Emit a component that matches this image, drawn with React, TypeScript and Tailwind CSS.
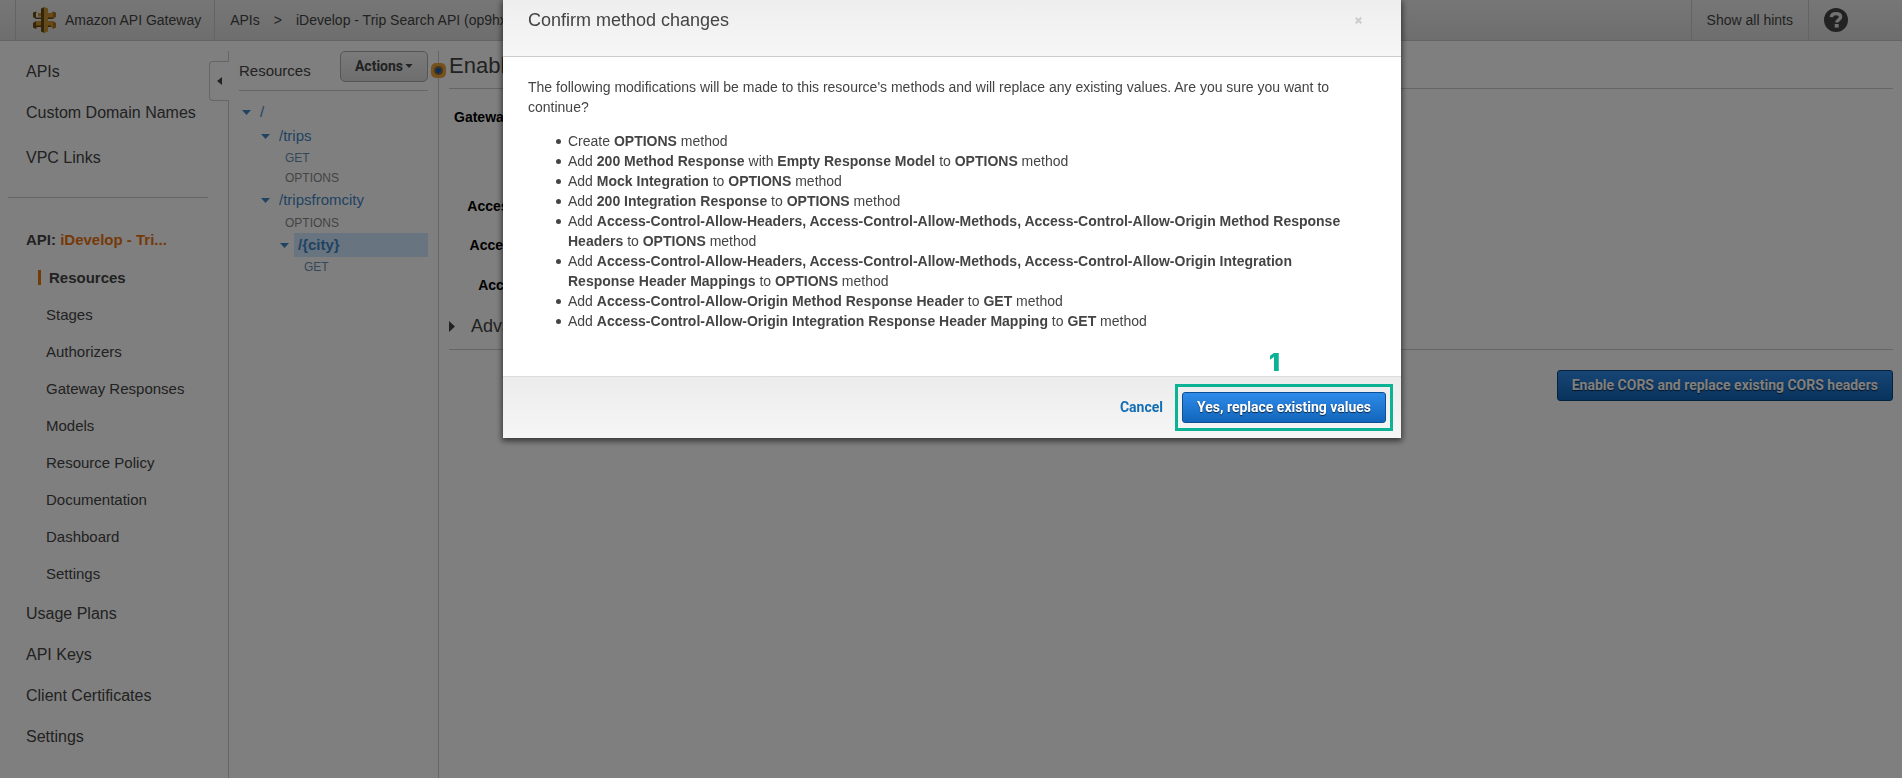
import React from "react";

const topLinks = ["APIs", "Custom Domain Names"];
const apiLinks = [
  "Stages",
  "Authorizers",
  "Gateway Responses",
  "Models",
  "Resource Policy",
  "Documentation",
  "Dashboard",
  "Settings",
];
const bottomLinks = ["Usage Plans", "API Keys", "Client Certificates", "Settings"];

function GatewayLogo() {
  return (
    <svg className="h-[26px] w-[23px]" viewBox="0 0 23 26" aria-hidden="true">
      <path d="M3 4.500L0 5.500v4.500l3 2zM3 14L0 16v4.500l3 1.500z" fill="#6b4a10" />
      <path d="M3 4.500V12h5V9.500H5V6.500L3 4.500zM3 6h5v6H3zM3 14h5v6H5l-2 2z" fill="#cf9530" />
      <path d="M15 6h3l2-1.500V12h-5zM15 14h5v8l-2-2h-3z" fill="#cf9530" />
      <path d="M20 4.500l3 1V10l-3 2zM20 14l3 2v4.500L20 22z" fill="#a87522" />
      <path d="M8 1.500L11.500 0v26L8 24.500z" fill="#6b4a10" />
      <path d="M11.500 0L15 1.500v23L11.500 26z" fill="#cf9530" />
      <path d="M3 12h5v-1.500H3zM15 12h5v-1.500h-5zM3 20h5v-1.500H3zM15 20h3v-1.500h-3z" fill="#6b4a10" />
    </svg>
  );
}

function Caret({ className = "h-[5px] w-[9px]" }: { className?: string }) {
  return (
    <svg className={`shrink-0 ${className}`} viewBox="0 0 9 5" aria-hidden="true">
      <path d="M0 0h9L4.500 5z" fill="currentColor" />
    </svg>
  );
}

function Header() {
  return (
    <header className="flex h-[41px] items-stretch border-b border-[#c8c8c8] bg-linear-to-b from-[#eeeeee] to-[#dcdcdc] text-sm text-[#444]">
      <div className="w-4 border-r border-[#c8c8c8]" />
      <a href="#home" className="flex items-center gap-[9px] border-r border-[#c8c8c8] pr-[13px] pl-[17px]">
        <GatewayLogo />
        Amazon API Gateway
      </a>
      <nav className="flex flex-1 items-center gap-[14px] pl-[15px]" aria-label="Breadcrumb">
        <a href="#apis">APIs</a>
        <span>&gt;</span>
        <a href="#api">iDevelop - Trip Search API (op9hx2k4tb)</a>
      </nav>
      <a href="#hints" className="flex items-center border-x border-[#c8c8c8] px-[15px]">
        Show all hints
      </a>
      <button type="button" aria-label="Help" className="mr-[54px] ml-[15px]">
        <svg className="size-6" viewBox="0 0 24 24" aria-hidden="true">
          <circle cx="12" cy="12" r="12" fill="#444" />
          <path
            d="M7.300 9.200C7.500 6.500 9.300 5.600 12 5.600c2.900 0 4.600 1.200 4.600 3.400 0 3-3.800 2.800-3.800 5.500"
            fill="none"
            stroke="#e4e4e4"
            strokeWidth="3.4"
          />
          <path d="M10.700 16h4v3.600h-4z" fill="#e4e4e4" />
        </svg>
      </button>
    </header>
  );
}

function Sidebar() {
  return (
    <div className="relative w-[229px] shrink-0 pt-[10px]">
      <nav className="h-full border-r border-[#ccc] text-base text-[#444]">
        <ul className="pl-[26px]">
          {topLinks.map((t) => (
            <li key={t} className="flex h-[41px] items-center">
              <a href="#nav">{t}</a>
            </li>
          ))}
          <li className="flex h-[49px] items-center">
            <a href="#nav">VPC Links</a>
          </li>
        </ul>
        <hr className="mt-[15px] mr-5 ml-2 border-[#ccc]" />
        <p className="mt-[30px] pl-[26px] text-[15px] leading-[24px] font-bold">
          API: <a href="#api" className="text-[#ec7211]">iDevelop - Tri...</a>
        </p>
        <ul className="mt-[7px] text-[15px]">
          <li className="mb-px flex h-[37px] items-center pl-[38px] font-bold">
            <a href="#resources" className="border-l-3 border-[#e47911] pl-2 leading-[15px]">
              Resources
            </a>
          </li>
          {apiLinks.map((t) => (
            <li key={t} className="flex h-[37px] items-center pl-[46px]">
              <a href="#nav">{t}</a>
            </li>
          ))}
        </ul>
        <ul className="pl-[26px]">
          {bottomLinks.map((t) => (
            <li key={t} className="flex h-[41px] items-center">
              <a href="#nav">{t}</a>
            </li>
          ))}
        </ul>
      </nav>
      <button
        type="button"
        aria-label="Collapse sidebar"
        className="absolute top-5 right-0 flex h-10 w-5 items-center justify-center rounded-l-sm border border-r-0 border-[#ccc] bg-white text-[#444]"
      >
        <svg className="h-2 w-[5px]" viewBox="0 0 5 8" aria-hidden="true">
          <path d="M5 0v8L0 4z" fill="currentColor" />
        </svg>
      </button>
    </div>
  );
}

function ResourceTree() {
  return (
    <section className="relative w-[210px] shrink-0 pt-[10px]">
      <div className="h-full border-r border-[#ccc] pr-[10px] pl-[10px] text-[15px] text-[#4386c5]">
        <div className="flex h-10 items-start justify-between border-b border-[#ccc] text-[#444]">
          <h2 className="pt-2 leading-6">Resources</h2>
          <button
            type="button"
            className="flex h-[31px] w-[88px] items-center justify-center gap-[2px] rounded-[5px] border border-[#aaa] bg-linear-to-b from-[#f5f5f5] to-[#dddddd] pb-px font-['Roboto',sans-serif] text-sm font-bold"
          >
            Actions
            <Caret className="h-1 w-2" />
          </button>
        </div>
        <ul className="pt-[9px]">
          <li>
            <div className="flex h-6 items-center gap-[9px] pl-[3px]">
              <Caret />
              <a href="#root">/</a>
            </div>
            <ul className="pl-[19px]">
              <li>
                <div className="flex h-6 items-center gap-[9px] pl-[3px]">
                  <Caret />
                  <a href="#trips">/trips</a>
                </div>
                <ul className="pl-[27px] text-xs leading-5">
                  <li><a href="#get" className="text-[#6a8fb5]">GET</a></li>
                  <li><a href="#options" className="text-[#888]">OPTIONS</a></li>
                </ul>
              </li>
              <li>
                <div className="flex h-[25px] items-center gap-[9px] pl-[3px]">
                  <Caret />
                  <a href="#tripsfromcity">/tripsfromcity</a>
                </div>
                <ul className="pl-[27px] text-xs leading-5">
                  <li><a href="#options" className="text-[#888]">OPTIONS</a></li>
                </ul>
                <div className="flex h-6 items-center gap-[5px] pl-[22px] font-bold">
                  <Caret />
                  <a href="#city" className="flex-1 bg-[#d1e8ff] pl-1 leading-6">/&#123;city&#125;</a>
                </div>
                <ul className="pl-[46px] text-xs leading-5">
                  <li><a href="#get" className="text-[#6a8fb5]">GET</a></li>
                </ul>
              </li>
            </ul>
          </li>
        </ul>
      </div>
      <div className="absolute top-[22px] -right-[7px] flex size-[15px] items-center justify-center rounded-[5px] bg-[#e8a23a]">
        <div className="size-[9px] rounded-full border-2 border-[#8a6a3a] bg-[#0b5fc0]" />
      </div>
    </section>
  );
}

function CorsForm() {
  return (
    <main className="min-w-0 flex-1 pt-[10px] pr-[9px] pl-[10px] text-[#444]">
      <h1 className="h-[38px] border-b border-[#ccc] text-[22px] leading-[30px]">Enable CORS</h1>
      <dl className="w-[226px] pt-[18px] text-right text-sm leading-5 font-bold text-black">
        <dt className="h-[89px]">Gateway Responses for iDevelop - Trip Search API</dt>
        <dt className="h-[39px] whitespace-nowrap">Access-Control-Allow-Methods</dt>
        <dt className="h-10 whitespace-nowrap">Access-Control-Allow-Headers</dt>
        <dt className="h-[39px] whitespace-nowrap">Access-Control-Allow-Origin*</dt>
      </dl>
      <button type="button" className="flex h-6 items-center gap-4 text-lg">
        <svg className="h-[11px] w-[6px]" viewBox="0 0 6 11" aria-hidden="true">
          <path d="M0 0v11l6-5.500z" fill="currentColor" />
        </svg>
        Advanced
      </button>
      <hr className="mt-[11px] border-[#ccc]" />
      <div className="mt-5 flex justify-end">
        <button
          type="button"
          className="h-[31px] rounded-[3px] border border-[#08467f] bg-linear-to-b from-[#2e8bea] to-[#1166bb] px-[14px] pb-px font-['Roboto',sans-serif] text-sm font-bold text-white text-shadow-[0_1px_1px_#000a]"
        >
          Enable CORS and replace existing CORS headers
        </button>
      </div>
    </main>
  );
}

function Change({ children }: { children: React.ReactNode }) {
  return (
    <li className="flex items-start gap-[7px]">
      <span className="mt-2 size-[5px] shrink-0 rounded-full bg-[#444]" />
      <span>{children}</span>
    </li>
  );
}

function ConfirmDialog() {
  return (
    <div className="fixed inset-0 flex items-start justify-center bg-black/50 pl-0.5">
      <div
        role="dialog"
        aria-modal="true"
        aria-labelledby="dialog-title"
        className="w-[898px] max-w-full bg-white text-sm leading-5 text-[#444] shadow-[0_2px_6px_1px_#0009]"
      >
        <div className="flex h-[57px] items-start justify-between border-b border-[#ccc] bg-linear-to-b from-[#eeeeee] to-[#f6f6f6] px-[25px] pt-2">
          <h2 id="dialog-title" className="text-lg leading-6">Confirm method changes</h2>
          <button type="button" aria-label="Close" className="mt-[9px] mr-[14px]">
            <svg className="size-[7px]" viewBox="0 0 7 7" aria-hidden="true">
              <path d="M.7.7l5.600 5.600M6.300.7L.7 6.300" stroke="#ccc" strokeWidth="2" />
            </svg>
          </button>
        </div>
        <div className="px-[25px] pt-5 pb-[45px]">
          <p>
            The following modifications will be made to this resource's methods and will replace any existing values. Are you sure you want to continue?
          </p>
          <ul className="mt-[14px] pr-5 pl-7">
            <Change>Create <b>OPTIONS</b> method</Change>
            <Change>Add <b>200 Method Response</b> with <b>Empty Response Model</b> to <b>OPTIONS</b> method</Change>
            <Change>Add <b>Mock Integration</b> to <b>OPTIONS</b> method</Change>
            <Change>Add <b>200 Integration Response</b> to <b>OPTIONS</b> method</Change>
            <Change>Add <b>Access-Control-Allow-Headers, Access-Control-Allow-Methods, Access-Control-Allow-Origin Method Response Headers</b> to <b>OPTIONS</b> method</Change>
            <Change>Add <b>Access-Control-Allow-Headers, Access-Control-Allow-Methods, Access-Control-Allow-Origin Integration Response Header Mappings</b> to <b>OPTIONS</b> method</Change>
            <Change>Add <b>Access-Control-Allow-Origin Method Response Header</b> to <b>GET</b> method</Change>
            <Change>Add <b>Access-Control-Allow-Origin Integration Response Header Mapping</b> to <b>GET</b> method</Change>
          </ul>
        </div>
        <div className="flex h-[62px] items-center justify-end gap-[19px] border-t border-[#ddd] bg-linear-to-b from-[#ececec] to-[#f6f6f6] pr-[15px] font-['Roboto',sans-serif] font-bold">
          <button type="button" className="pb-px text-[#146eb4]">Cancel</button>
          <div className="relative">
            <button
              type="button"
              className="h-[31px] rounded-[3px] border border-[#0b4f94] bg-linear-to-b from-[#2e8bea] to-[#1166bb] px-[14px] pb-px text-white text-shadow-[0_1px_1px_#000a]"
            >
              Yes, replace existing values
            </button>
            <div className="pointer-events-none absolute -inset-x-[7px] -inset-y-2 border-3 border-[#0cb294]" />
            <span className="absolute bottom-[46px] left-[87px] font-['Inter',sans-serif] text-2xl leading-7 font-black text-[#0cb294]">
              1
            </span>
          </div>
        </div>
      </div>
    </div>
  );
}

export default function App() {
  return (
    <div className="flex min-h-screen flex-col bg-white font-['Liberation_Sans',Arial,sans-serif]">
      <Header />
      <div className="flex flex-1 items-stretch">
        <Sidebar />
        <ResourceTree />
        <CorsForm />
      </div>
      <ConfirmDialog />
    </div>
  );
}
